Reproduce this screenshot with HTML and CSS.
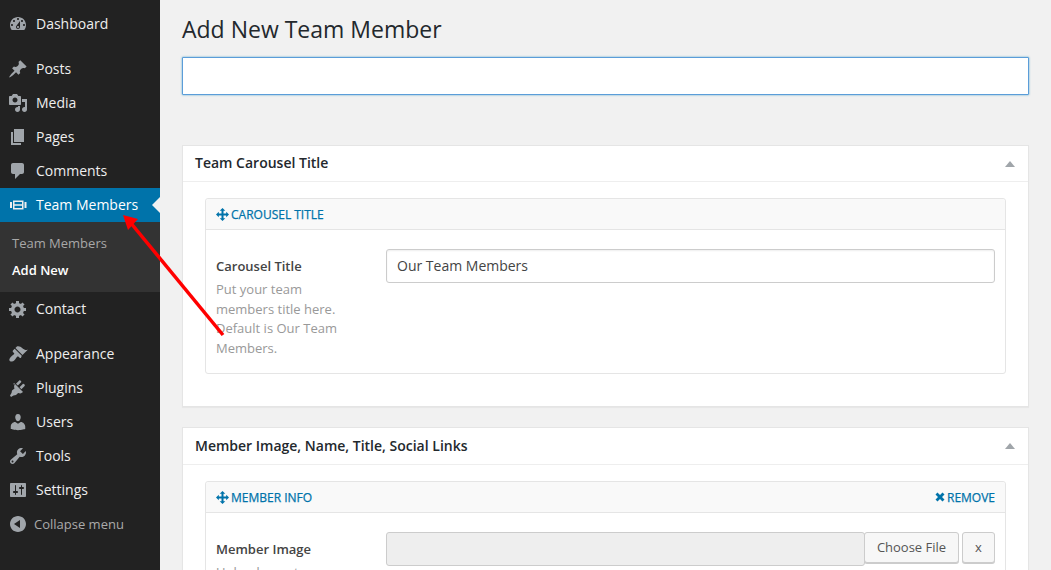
FILE: index.html
```html
<!DOCTYPE html>
<html lang="en">
<head>
<meta charset="utf-8">
<title>Add New Team Member</title>
<link rel="stylesheet" href="styles.css">
</head>
<body>
<div class="page">
  <nav class="side">
    <ul class="menu first">
      <li class="item"><svg class="ic" viewBox="0 0 20 20"><path fill-rule="evenodd" d="M3.760 16h12.480c1.100-1.370 1.760-3.110 1.760-5 0-4.420-3.580-8-8-8s-8 3.580-8 8c0 1.890.66 3.630 1.760 5zM10 4c.55 0 1 .45 1 1s-.45 1-1 1-1-.45-1-1 .45-1 1-1zM6 6c.55 0 1 .45 1 1s-.45 1-1 1-1-.45-1-1 .45-1 1-1zm8 0c.55 0 1 .45 1 1s-.45 1-1 1-1-.45-1-1 .45-1 1-1zm-5.370 5.550L12 7v6c0 1.100-.9 2-2 2s-2-.9-2-2c0-.57.24-1.080.63-1.450zM4 10c.55 0 1 .45 1 1s-.45 1-1 1-1-.45-1-1 .45-1 1-1zm12 0c.55 0 1 .45 1 1s-.45 1-1 1-1-.45-1-1 .45-1 1-1zm-5 3c0-.55-.45-1-1-1s-1 .45-1 1 .45 1 1 1 1-.45 1-1z"/></svg><span>Dashboard</span></li>
    </ul>
    <ul class="menu">
      <li class="item"><svg class="ic" viewBox="0 0 20 20"><path d="M10.440 3.020l1.820-1.820 6.360 6.350-1.830 1.820c-1.050-.68-2.480-.57-3.410.36l-.75.75c-.92.93-1.040 2.350-.35 3.410l-1.830 1.820-2.410-2.410-2.800 2.790c-.42.42-3.380 2.710-3.800 2.290s1.860-3.390 2.280-3.810l2.790-2.790L4.100 9.360l1.830-1.820c1.050.69 2.480.57 3.400-.36l.75-.75c.93-.92 1.050-2.350.36-3.410z"/></svg><span>Posts</span></li>
      <li class="item"><svg class="ic" viewBox="0 0 20 20"><path fill-rule="evenodd" d="M13 11V4c0-.55-.45-1-1-1h-1.670L9 1H5L3.670 3H2c-.55 0-1 .45-1 1v7c0 .55.45 1 1 1h10c.55 0 1-.45 1-1zM7 4.500c1.380 0 2.500 1.120 2.500 2.500S8.380 9.500 7 9.500 4.500 8.380 4.500 7 5.620 4.500 7 4.500zM14 6h5v10.500c0 1.380-1.120 2.500-2.500 2.500S14 17.880 14 16.500s1.120-2.500 2.500-2.500c.17 0 .34.020.5.050V9h-3V6zm-4 8.050V13h2v3.500c0 1.380-1.120 2.500-2.500 2.500S7 17.880 7 16.500 8.120 14 9.500 14c.17 0 .34.020.5.050z"/></svg><span>Media</span></li>
      <li class="item"><svg class="ic" viewBox="0 0 20 20"><path d="M6 15V2h10v13H6zm-1 1h8v2H3V5h2v11z"/></svg><span>Pages</span></li>
      <li class="item"><svg class="ic" viewBox="0 0 20 20"><path d="M5 2h9c1.100 0 2 .9 2 2v7c0 1.100-.9 2-2 2h-2l-5 5v-5H5c-1.100 0-2-.9-2-2V4c0-1.100.9-2 2-2z"/></svg><span>Comments</span></li>
      <li class="item current"><svg class="ic" viewBox="0 0 20 20"><path fill-rule="evenodd" d="M5 5.500h10.500v9H5zM6.500 7v2.200h7.500V7zM6.500 10.800V13h7.500v-2.200zM2 7h2v6H2zM16.500 7h2v6h-2z"/></svg><span>Team Members</span></li>
      <li class="sub">
        <div class="sub-link">Team Members</div>
        <div class="sub-link on">Add New</div>
      </li>
      <li class="item"><svg class="ic" viewBox="0 0 20 20"><path fill-rule="evenodd" d="M18 12h-2.180c-.17.7-.44 1.350-.81 1.930l1.540 1.540-2.100 2.100-1.540-1.540c-.58.36-1.230.63-1.910.79V19H8v-2.180c-.68-.16-1.330-.43-1.910-.79l-1.540 1.540-2.120-2.120 1.540-1.540c-.36-.58-.63-1.230-.79-1.910H1V9.030h2.170c.16-.7.44-1.350.8-1.940L2.430 5.550l2.100-2.100 1.540 1.540c.58-.37 1.240-.64 1.930-.81V2h3v2.180c.68.16 1.330.43 1.910.79l1.540-1.540 2.120 2.120-1.540 1.540c.36.590.64 1.240.8 1.940H18V12zm-8.500 1.500c1.660 0 3-1.340 3-3s-1.340-3-3-3-3 1.340-3 3 1.340 3 3 3z"/></svg><span>Contact</span></li>
    </ul>
    <ul class="menu">
      <li class="item"><svg class="ic" viewBox="0 0 20 20"><path d="M14.480 11.060L7.410 3.990l1.500-1.500c.5-.56 2.300-.47 3.510.32 1.210.8 1.430 1.280 2.910 2.100 1.180.64 2.450 1.260 4.450.85zM13.770 11.770L6.700 4.700 4.930 6.470c-.39.39-.39 1.020 0 1.410l1.060 1.060c.39.39.39 1.030 0 1.420-.6.600-1.430 1.110-2.210 1.690-.35.26-.7.530-1.010.84-1.200 1.200-1.700 2.700-1.300 3.700.2.5.8.9 1.400 1 1.300.1 2.900-.7 3.800-1.700.3-.3.6-.7.8-1 .6-.8 1.100-1.600 1.700-2.200.4-.4 1-.4 1.400 0l1.060 1.060c.39.39 1.020.39 1.410 0z"/></svg><span>Appearance</span></li>
      <li class="item"><svg class="ic" viewBox="0 0 20 20"><path d="M13.110 4.360L9.870 7.600 8 5.730l3.240-3.240c.35-.34 1.050-.2 1.560.32.52.51.66 1.210.31 1.550zM16.640 7.890l-3.240 3.240-1.870-1.870 3.240-3.240c.35-.34 1.050-.2 1.560.31.52.52.66 1.220.31 1.560zM5.110 6.130l.91-1.120 9.010 9.010-1.190.84c-.71.71-2.110.8-3.710.2L8 17l-2.500.5-2.500 1.500-1-1.500 1.500-2.500.5-2.500 2.500-2c-.7-1.700-.5-3.700.61-4.370z"/></svg><span>Plugins</span></li>
      <li class="item"><svg class="ic" viewBox="0 0 20 20"><path d="M10 9.250c-2.270 0-2.730-3.440-2.730-3.440C7 4.020 7.820 2 9.970 2c2.160 0 2.980 2.020 2.710 3.810 0 0-.41 3.440-2.680 3.440zm0 2.570L12.720 10c2.390 0 4.520 2.330 4.520 4.530v2.490s-3.650 1.130-7.240 1.130c-3.650 0-7.240-1.130-7.240-1.130v-2.490c0-2.250 1.940-4.480 4.470-4.480z"/></svg><span>Users</span></li>
      <li class="item"><svg class="ic" viewBox="0 0 20 20"><path fill-rule="evenodd" d="M16.680 9.770c-1.340 1.340-3.300 1.670-4.950.99l-5.410 6.520c-.99.99-2.590.99-3.580 0s-.99-2.590 0-3.570l6.520-5.420c-.68-1.650-.35-3.610.99-4.950 1.280-1.280 3.120-1.620 4.720-1.060l-2.890 2.890 2.820 2.820 2.860-2.870c.53 1.580.18 3.400-1.080 4.650zM3.810 16.210c.4.390 1.040.39 1.430 0 .4-.4.400-1.040 0-1.430-.39-.4-1.030-.4-1.430 0-.39.39-.39 1.030 0 1.430z"/></svg><span>Tools</span></li>
      <li class="item"><svg class="ic" viewBox="0 0 20 20"><path fill-rule="evenodd" d="M18 16V4c0-.55-.45-1-1-1H3c-.55 0-1 .45-1 1v12c0 .55.45 1 1 1h14c.55 0 1-.45 1-1zM8 11h1c.55 0 1 .45 1 1s-.45 1-1 1H8v1.500c0 .28-.22.5-.5.5s-.5-.22-.5-.5V13H6c-.55 0-1-.45-1-1s.45-1 1-1h1V5.500c0-.28.22-.5.5-.5s.5.22.5.5V11zm5-2h-1c-.55 0-1-.45-1-1s.45-1 1-1h1V5.500c0-.28.22-.5.5-.5s.5.22.5.5V7h1c.55 0 1 .45 1 1s-.45 1-1 1h-1v5.500c0 .28-.22.5-.5.5s-.5-.22-.5-.5V9z"/></svg><span>Settings</span></li>
      <li class="item collapse"><svg class="ic" viewBox="0 0 20 20"><path fill-rule="evenodd" d="M10 2.010c4.420 0 8 3.580 8 8s-3.580 8-8 8-8-3.580-8-8 3.580-8 8-8zm1.990 12V6.010L6 10z"/></svg><span>Collapse menu</span></li>
    </ul>
  </nav>

  <main class="main">
    <h1 class="title">Add New Team Member</h1>
    <input class="title-input" type="text" aria-label="Title">

    <section class="box">
      <header class="box-head"><h2>Team Carousel Title</h2><i class="caret"></i></header>
      <div class="box-body">
        <div class="group">
          <div class="group-head">
            <span class="handle"><svg class="move" viewBox="0 0 13 13"><path d="M6.500 0l2.800 2.800H7.500v2.700h2.700V3.700l2.800 2.800-2.800 2.800V7.500H7.500v2.700h1.800L6.500 13l-2.800-2.800h1.800V7.500H2.800v1.800L0 6.500l2.800-2.800v1.800h2.700V2.800H3.700z"/></svg>CAROUSEL TITLE</span>
          </div>
          <div class="row tall">
            <div class="label">
              <strong>Carousel Title</strong>
              <p>Put your team members title here. Default is Our Team Members.</p>
            </div>
            <div class="field"><input class="text" type="text" value="Our Team Members" aria-label="Carousel Title"></div>
          </div>
        </div>
      </div>
    </section>

    <section class="box second">
      <header class="box-head"><h2>Member Image, Name, Title, Social Links</h2><i class="caret"></i></header>
      <div class="box-body">
        <div class="group">
          <div class="group-head">
            <span class="handle"><svg class="move" viewBox="0 0 13 13"><path d="M6.500 0l2.800 2.800H7.500v2.700h2.700V3.700l2.800 2.800-2.800 2.800V7.500H7.500v2.700h1.800L6.500 13l-2.800-2.800h1.800V7.500H2.800v1.800L0 6.500l2.800-2.800v1.800h2.700V2.800H3.700z"/></svg>MEMBER INFO</span>
            <span class="handle"><svg class="cross" viewBox="0 0 10 10"><path d="M2.500.5L5 3 7.500.5l2 2L7 5l2.500 2.500-2 2L5 7 2.500 9.500l-2-2L3 5 .5 2.500z"/></svg>REMOVE</span>
          </div>
          <div class="row">
            <div class="label">
              <strong>Member Image</strong>
              <p>Upload your team</p>
            </div>
            <div class="field upload">
              <div class="file-path"></div>
              <button class="btn" type="button">Choose File</button>
              <button class="btn x" type="button">x</button>
            </div>
          </div>
        </div>
      </div>
    </section>
  </main>
</div>

<svg class="arrow" viewBox="0 0 260 360" width="260" height="360" aria-hidden="true">
  <path d="M223 335L130 222" stroke="#f00" stroke-width="3.500" fill="none"/>
  <path d="M123 215L138 219L128 230Z" fill="#f00"/>
</svg>
</body>
</html>
```
FILE: styles.css
```css
* { box-sizing: border-box; }
html, body { margin: 0; height: 100%; overflow: hidden; }
body {
  background: #f1f1f1;
  font-family: "Open Sans", sans-serif;
  font-size: 14px;
  color: #444;
}
.page { display: flex; height: 570px; overflow: hidden; }

/* Sidebar */
.side { width: 160px; flex: none; background: #222; padding-top: 7px; }
.menu { list-style: none; margin: 0 0 11px; padding: 0; }
.item {
  height: 34px;
  display: flex;
  align-items: center;
  padding-left: 8px;
  gap: 8px;
  color: #eee;
  font-size: 14px;
}
.item span { margin-bottom: 2px; }
.ic { width: 20px; height: 20px; flex: none; fill: #a0a5aa; }
.item.current { background: #0073aa; color: #fff; position: relative; }
.item.current .ic { fill: #eee; }
.item.current::after {
  content: "";
  position: absolute;
  right: 0;
  top: 9px;
  border: 8px solid transparent;
  border-right-color: #f1f1f1;
  border-left-width: 0;
}
.sub { background: #333; height: 70px; padding-top: 8px; }
.sub-link { font-size: 13px; line-height: 27px; padding-left: 12px; color: #a8a8a8; }
.sub-link.on { color: #fff; font-weight: 600; }
.item.collapse { color: #aaa; font-size: 13px; gap: 6px; }
.item.collapse span { margin-bottom: 0; }

/* Main */
.main { flex: 1; min-width: 0; padding: 0 22px; }
.title {
  margin: 0;
  padding-top: 11px;
  height: 57px;
  font-size: 23px;
  line-height: 36px;
  font-weight: 400;
  color: #23282d;
}
.title-input {
  display: block;
  width: 100%;
  height: 38px;
  border: 1px solid #5b9dd9;
  border-radius: 1px;
  background: #fff;
  box-shadow: 0 0 2px rgba(30, 140, 190, .8);
  outline: 0;
}
.box {
  margin-top: 50px;
  background: #fff;
  border: 1px solid #e5e5e5;
  box-shadow: 0 1px 1px rgba(0, 0, 0, .04);
}
.box.second { margin-top: 20px; }
.box-head {
  height: 36px;
  display: flex;
  align-items: center;
  justify-content: space-between;
  padding: 0 13px 0 12px;
  border-bottom: 1px solid #eee;
}
.second .box-head { height: 37px; }
.box-head h2 { margin: 0 0 2px; font-size: 14px; font-weight: 600; color: #23282d; }
.caret {
  width: 0;
  border: 5px solid transparent;
  border-top-width: 0;
  border-bottom: 6px solid #a0a5aa;
}
.box-body { padding: 16px 22px 32px; }
.group { background: #fff; border: 1px solid #e5e5e5; border-radius: 3px; }
.group-head {
  height: 31px;
  display: flex;
  align-items: center;
  justify-content: space-between;
  padding: 0 10px;
  background: #f9f9f9;
  border-bottom: 1px solid #e5e5e5;
  border-radius: 3px 3px 0 0;
  color: #0073aa;
  font-size: 12px;
  font-weight: 400;
  -webkit-text-stroke: .25px #0073aa;
}
.handle { display: flex; align-items: center; gap: 2px; }
.move { width: 13px; height: 13px; fill: #0073aa; }
.cross { width: 10px; height: 10px; fill: #0073aa; }
.row { display: flex; padding: 19px 10px 0; }
.row.tall { min-height: 143px; }
.label { width: 170px; flex: none; padding-top: 7px; padding-right: 40px; }
.label strong { display: block; font-size: 13px; line-height: 20px; font-weight: 600; color: #444; }
.label p { margin: 4px 0 0; font-size: 13px; line-height: 19.600px; color: #999; }
.field { flex: 1; min-width: 0; }
.text {
  display: block;
  width: 100%;
  height: 34px;
  padding: 0 10px 2px;
  border: 1px solid #ccc;
  border-radius: 3px;
  background: #fff;
  font-family: inherit;
  font-size: 14px;
  color: #444;
  box-shadow: inset 0 1px 2px rgba(0, 0, 0, .07);
}
.upload { display: flex; align-items: flex-start; }
.file-path {
  flex: 1;
  height: 34px;
  background: #eee;
  border: 1px solid #ccc;
  border-radius: 3px;
}
.btn {
  height: 31px;
  margin: 0;
  padding: 0 0 2px;
  width: 95px;
  margin-left: -1px;
  border: 1px solid #ccc;
  border-radius: 3px;
  background: #f7f7f7;
  box-shadow: 0 1px 0 #ccc;
  font-family: inherit;
  font-size: 13px;
  color: #555;
}
.btn.x { width: 33px; margin-left: 3px; }

/* Annotation drawn over the screenshot */
.arrow { position: absolute; left: 0; top: 0; pointer-events: none; }
```
